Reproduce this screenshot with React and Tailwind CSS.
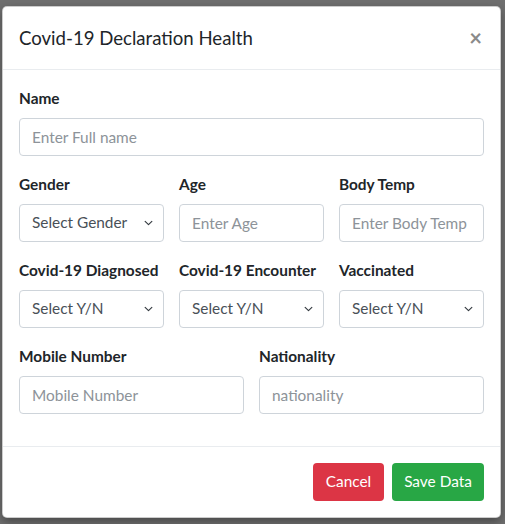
import React from 'react';

const Chevron = () => (
  <svg className="pointer-events-none absolute right-[11px] top-1/2 -translate-y-1/2" width="9" height="9" viewBox="0 0 16 16">
    <path d="M2 5l6 6 6-6" fill="none" stroke="#343a40" strokeWidth="2" strokeLinecap="round" strokeLinejoin="round" />
  </svg>
);

const Field = ({ label, placeholder }) => (
  <div className="flex flex-col">
    <label className="mb-2 text-[15.4px] font-bold leading-6 text-[#212529]">{label}</label>
    <input
      placeholder={placeholder}
      className="h-[38px] w-full rounded-[4px] border border-[#ced4da] bg-white px-3 text-[15.4px] text-[#495057] outline-none placeholder:text-[#8d9399]"
    />
  </div>
);

const SelectField = ({ label, placeholder }) => (
  <div className="flex flex-col">
    <label className="mb-2 whitespace-nowrap text-[15.4px] font-bold leading-6 text-[#212529]">{label}</label>
    <div className="relative">
      <select className="h-[38px] w-full appearance-none rounded-[4px] border border-[#ced4da] bg-white pl-3 pr-7 text-[15.4px] text-[#495057] outline-none">
        <option>{placeholder}</option>
      </select>
      <Chevron />
    </div>
  </div>
);

export default function App() {
  return (
    <div className="min-h-[524px] w-full bg-[#6f6f6f] pt-[6px] pl-[2px] pr-[4px] font-['Lato',sans-serif]">
      <div className="w-[499px] overflow-hidden rounded-[5px] border border-black/20 bg-white shadow-[0_4px_10px_rgba(0,0,0,0.35)]">
        {/* Header */}
        <div className="flex items-center justify-between border-b border-[#e9ecef] px-4 py-4">
          <h5 className="text-[18.6px] leading-[30px] text-[#212529]">Covid-19 Declaration Health</h5>
          <button className="mr-[2px] text-[22px] font-bold leading-none text-[#8a8a8a]">×</button>
        </div>

        {/* Body */}
        <div className="flex flex-col gap-4 px-4 pt-4 pb-8">
          <Field label="Name" placeholder="Enter Full name" />
          <div className="grid grid-cols-3 gap-x-[15px]">
            <SelectField label="Gender" placeholder="Select Gender" />
            <Field label="Age" placeholder="Enter Age" />
            <Field label="Body Temp" placeholder="Enter Body Temp" />
          </div>
          <div className="grid grid-cols-3 gap-x-[15px]">
            <SelectField label="Covid-19 Diagnosed" placeholder="Select Y/N" />
            <SelectField label="Covid-19 Encounter" placeholder="Select Y/N" />
            <SelectField label="Vaccinated" placeholder="Select Y/N" />
          </div>
          <div className="grid grid-cols-2 gap-x-[15px]">
            <Field label="Mobile Number" placeholder="Mobile Number" />
            <Field label="Nationality" placeholder="nationality" />
          </div>
        </div>

        {/* Footer */}
        <div className="flex justify-end gap-2 border-t border-[#e9ecef] px-4 py-4">
          <button className="h-[38px] w-[71px] rounded-[4px] bg-[#dc3545] text-[15.4px] text-white">Cancel</button>
          <button className="h-[38px] w-[92px] rounded-[4px] bg-[#28a745] text-[15.4px] text-white">Save Data</button>
        </div>
      </div>
    </div>
  );
}
